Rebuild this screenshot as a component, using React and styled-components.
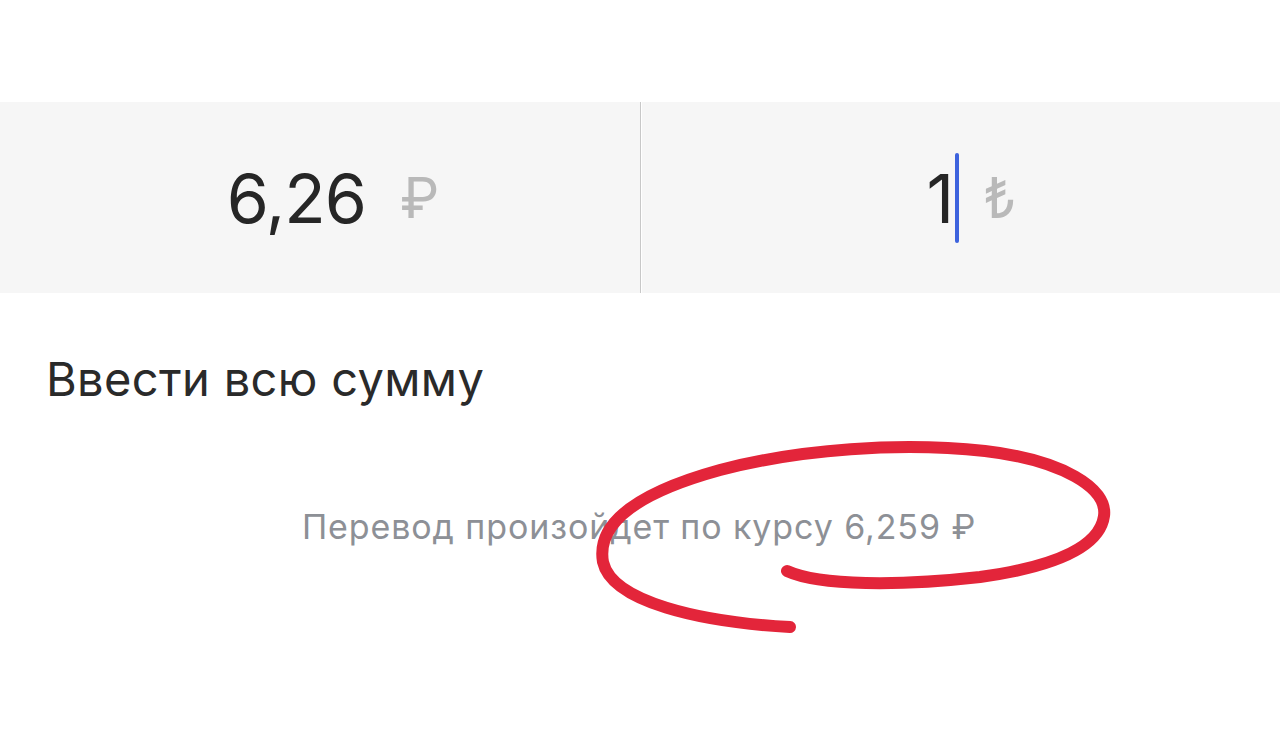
import React from 'react';
import styled, { createGlobalStyle } from 'styled-components';

const GlobalStyle = createGlobalStyle`
  html, body {
    margin: 0;
    padding: 0;
    background: #ffffff;
  }
  body {
    font-family: Inter, "Noto Sans", sans-serif;
    -webkit-font-smoothing: antialiased;
  }
`;

const Page = styled.div`
  position: relative;
  width: 1280px;
  height: 740px;
  overflow: hidden;
  padding-top: 102px;
  box-sizing: border-box;
`;

const AmountBand = styled.div`
  display: grid;
  grid-template-columns: 1fr 1fr;
  height: 191px;
  background: #f6f6f6;
`;

const AmountCell = styled.div`
  display: flex;
  align-items: center;
  justify-content: center;
  gap: ${(p) => p.$gap}px;
  padding-left: ${(p) => p.$shift}px;
  border-left: ${(p) => (p.$divided ? '1px solid #c8c8c8' : 'none')};
  box-shadow: ${(p) => (p.$divided ? 'inset 1px 0 0 #ffffff' : 'none')};
`;

const Amount = styled.span`
  font-size: 68px;
  font-weight: 400;
  color: #262626;
  letter-spacing: -1px;
  line-height: 1;
  display: flex;
  align-items: center;
`;

const Currency = styled.span`
  font-size: 56px;
  color: #b9b9b9;
  line-height: 1;
`;

const Caret = styled.span`
  display: inline-block;
  width: 4px;
  height: 90px;
  border-radius: 2px;
  background: #3d63dd;
  margin-left: 2px;
`;

const FullSum = styled.div`
  margin: 62px 0 0 46px;
  font-size: 47px;
  color: #2a2a2a;
  letter-spacing: 0.35px;
  line-height: 1;
`;

const RateNote = styled.div`
  margin-top: 108px;
  text-align: center;
  padding-right: 2px;
  font-size: 34px;
  color: #8d9096;
  letter-spacing: 0.9px;
  line-height: 1;
  white-space: nowrap;
`;

const Scribble = styled.svg`
  position: absolute;
  left: 0;
  top: 0;
  pointer-events: none;
`;

export default function App() {
  return (
    <>
      <GlobalStyle />
      <Page>
        <AmountBand>
          <AmountCell $gap={34} $shift={26}>
            <Amount>6,26</Amount>
            <Currency>₽</Currency>
          </AmountCell>
          <AmountCell $divided $gap={24} $shift={22}>
            <Amount>
              1<Caret />
            </Amount>
            <Currency>₺</Currency>
          </AmountCell>
        </AmountBand>
        <FullSum>Ввести всю сумму</FullSum>
        <RateNote>Перевод произойдет по курсу 6,259 ₽</RateNote>
        <Scribble width="1280" height="740" viewBox="0 0 1280 740">
          <path
            d="M 790 627 C 700 622, 612 602, 603 562 C 596 522, 640 492, 720 470 C 800 449, 900 442, 985 451 C 1062 460, 1108 488, 1104 516 C 1100 545, 1060 566, 980 577 C 900 586, 820 586, 787 571"
            fill="none"
            stroke="#e3253a"
            strokeWidth="12"
            strokeLinecap="round"
            strokeLinejoin="round"
          />
        </Scribble>
      </Page>
    </>
  );
}
